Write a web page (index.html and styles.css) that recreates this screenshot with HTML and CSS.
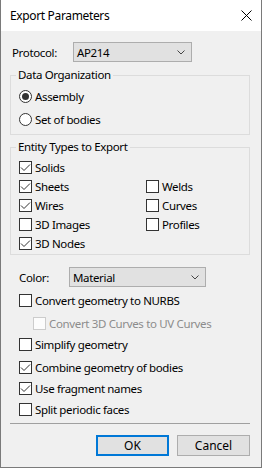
FILE: index.html
```html
<!DOCTYPE html>
<html lang="en">
<head>
    <meta charset="UTF-8">
    <meta name="viewport" content="width=device-width, initial-scale=1.0">
    <title>Export Parameters</title>
    <link rel="stylesheet" href="styles.css">
</head>
<body>
<div class="window">
    <div class="titlebar">
        <span class="title">Export Parameters</span>
        <svg class="close" width="11" height="11" viewBox="0 0 11 11">
            <path d="M0.5 0.5 L10.5 10.5 M10.5 0.5 L0.5 10.5" stroke="#000" stroke-width="1" fill="none"/>
        </svg>
    </div>
    <div class="content">
        <div class="field protocol">
            <span class="field-label">Protocol:</span>
            <div class="select select-protocol">
                <span>AP214</span>
                <svg class="chevron" width="8" height="5" viewBox="0 0 8 5"><path d="M0.5 0.5 L4 4 L7.5 0.5" stroke="#444" fill="none"/></svg>
            </div>
        </div>

        <fieldset class="group group-org">
            <legend>Data Organization</legend>
            <div class="option radio-row"><span class="radio checked"></span>Assembly</div>
            <div class="option radio-row"><span class="radio"></span>Set of bodies</div>
        </fieldset>

        <fieldset class="group group-entities">
            <legend>Entity Types to Export</legend>
            <div class="entity-grid">
                <div class="option"><span class="check on"><svg width="11" height="11" viewBox="0 0 11 11"><path d="M1 5.5 L4 8.5 L10 2.5" stroke="#333" fill="none"/></svg></span>Solids</div>
                <div></div>
                <div class="option"><span class="check on"><svg width="11" height="11" viewBox="0 0 11 11"><path d="M1 5.5 L4 8.5 L10 2.5" stroke="#333" fill="none"/></svg></span>Sheets</div>
                <div class="option"><span class="check"></span>Welds</div>
                <div class="option"><span class="check on"><svg width="11" height="11" viewBox="0 0 11 11"><path d="M1 5.5 L4 8.5 L10 2.5" stroke="#333" fill="none"/></svg></span>Wires</div>
                <div class="option"><span class="check"></span>Curves</div>
                <div class="option"><span class="check"></span>3D Images</div>
                <div class="option"><span class="check"></span>Profiles</div>
                <div class="option"><span class="check on"><svg width="11" height="11" viewBox="0 0 11 11"><path d="M1 5.5 L4 8.5 L10 2.5" stroke="#333" fill="none"/></svg></span>3D Nodes</div>
            </div>
        </fieldset>

        <div class="field color">
            <span class="field-label">Color:</span>
            <div class="select select-color">
                <span>Material</span>
                <svg class="chevron" width="8" height="5" viewBox="0 0 8 5"><path d="M0.5 0.5 L4 4 L7.5 0.5" stroke="#444" fill="none"/></svg>
            </div>
        </div>

        <div class="option setting first"><span class="check"></span>Convert geometry to NURBS</div>
        <div class="option setting sub disabled gap"><span class="check"></span>Convert 3D Curves to UV Curves</div>
        <div class="option setting"><span class="check"></span>Simplify geometry</div>
        <div class="option setting gap"><span class="check on"><svg width="11" height="11" viewBox="0 0 11 11"><path d="M1 5.5 L4 8.5 L10 2.5" stroke="#333" fill="none"/></svg></span>Combine geometry of bodies</div>
        <div class="option setting"><span class="check on"><svg width="11" height="11" viewBox="0 0 11 11"><path d="M1 5.5 L4 8.5 L10 2.5" stroke="#333" fill="none"/></svg></span>Use fragment names</div>
        <div class="option setting"><span class="check"></span>Split periodic faces</div>

        <div class="separator"></div>

        <div class="buttons">
            <button class="btn btn-default">OK</button>
            <button class="btn">Cancel</button>
        </div>
    </div>
</div>
</body>
</html>
```

FILE: styles.css
```css
* {
    margin: 0;
    padding: 0;
    box-sizing: border-box;
}
body {
    font-family: 'Noto Sans', 'Open Sans', sans-serif;
    font-size: 11.5px;
    letter-spacing: -0.35px;
    color: #000;
    background: #f0f0f0;
}
.window {
    width: 262px;
    height: 468px;
    border: 1px solid #7a7a7a;
    border-top: none;
    background: #f0f0f0;
}
.titlebar {
    height: 31px;
    background: #fff;
    display: flex;
    align-items: center;
    justify-content: space-between;
    padding: 0 9px 0 9px;
    font-size: 12px;
}
.close {
    display: block;
}
.content {
    padding: 0 11px 0 9px;
}
.field {
    display: flex;
    align-items: center;
    height: 20px;
}
.protocol {
    margin-top: 11px;
    padding-left: 2px;
}
.protocol .field-label {
    width: 61px;
}
.color {
    margin-top: 12px;
    padding-left: 9px;
}
.color .field-label {
    width: 50px;
}
.select {
    height: 20px;
    background: #e1e1e1;
    border: 1px solid #adadad;
    display: flex;
    align-items: center;
    justify-content: space-between;
    padding: 0 6px 0 3px;
}
.select-protocol {
    width: 119px;
}
.select-color {
    width: 137px;
}
.chevron {
    display: block;
}
.group {
    border: 1px solid #dcdcdc;
    padding: 0 8px;
}
.group legend {
    line-height: 14px;
    padding: 0 2px;
    margin-left: -3px;
}
.group-org {
    margin-top: 6px;
    padding-top: 3px;
    padding-bottom: 3px;
}
.group-entities {
    margin-top: 5px;
    padding-top: 4px;
    padding-bottom: 1px;
}
.option {
    display: flex;
    align-items: center;
    height: 19px;
}
.radio-row {
    height: 23px;
}
.entity-grid {
    display: grid;
    grid-template-columns: 127px 1fr;
}
.radio {
    width: 13px;
    height: 13px;
    border: 1px solid #333;
    border-radius: 50%;
    background: #fff;
    margin-right: 3px;
    display: flex;
    align-items: center;
    justify-content: center;
}
.radio.checked::after {
    content: "";
    width: 7px;
    height: 7px;
    border-radius: 50%;
    background: #333;
}
.check {
    width: 13px;
    height: 13px;
    border: 1px solid #333;
    background: #fff;
    margin-right: 3px;
    flex: none;
}
.check svg {
    display: block;
}
.setting {
    height: 21px;
    padding-left: 9px;
}
.setting.first {
    margin-top: 3px;
}
.setting.gap {
    margin-top: 2px;
}
.setting.sub {
    padding-left: 23px;
}
.disabled {
    color: #8c8c8c;
}
.disabled .check {
    border-color: #cccccc;
    background: #fcfcfc;
}
.separator {
    margin-top: 3px;
    border-top: 1px solid #a0a0a0;
}
.buttons {
    display: flex;
    justify-content: flex-end;
    gap: 8px;
    margin-top: 11px;
}
.btn {
    width: 73px;
    height: 21px;
    background: #e1e1e1;
    border: 1px solid #adadad;
    font-family: inherit;
    font-size: 12px;
    letter-spacing: 0;
    color: #000;
}
.btn-default {
    border: 2px solid #0078d7;
}
```
